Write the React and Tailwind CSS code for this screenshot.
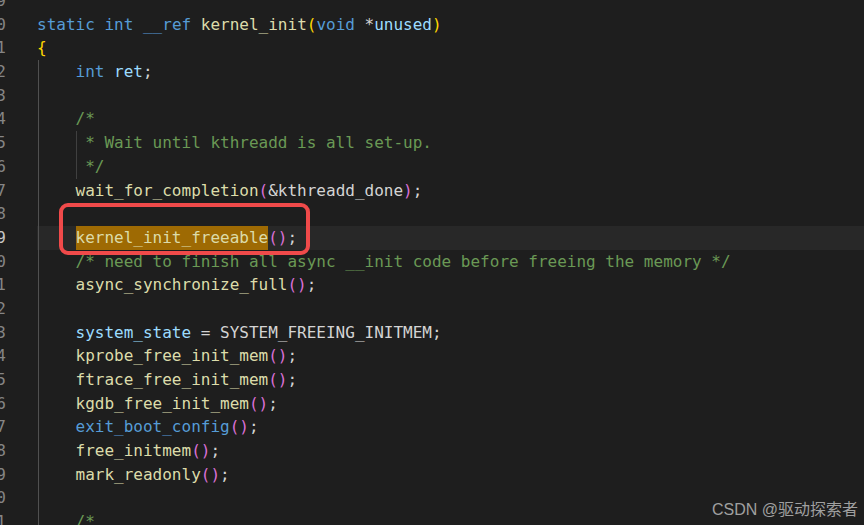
const C = {
  k: 'text-[#569cd6]',
  f: 'text-[#dcdcaa]',
  v: 'text-[#9cdcfe]',
  p: 'text-[#d4d4d4]',
  c: 'text-[#6a9955]',
  b1: 'text-[#ffd700]',
  b2: 'text-[#da70d6]',
};

// each line: [tokens, indent guides]
const lines = [
  [[], 0],
  [[['static', 'k'], [' ', 'p'], ['int', 'k'], [' ', 'p'], ['__ref', 'k'], [' ', 'p'], ['kernel_init', 'f'], ['(', 'b1'], ['void', 'k'], [' *', 'p'], ['unused', 'v'], [')', 'b1']], 0],
  [[['{', 'b1']], 0],
  [[['    ', 'p'], ['int', 'k'], [' ', 'p'], ['ret', 'v'], [';', 'p']], 1],
  [[], 1],
  [[['    /*', 'c']], 1],
  [[['     * Wait until kthreadd is all set-up.', 'c']], 2],
  [[['     */', 'c']], 2],
  [[['    ', 'p'], ['wait_for_completion', 'f'], ['(', 'b2'], ['&kthreadd_done', 'p'], [')', 'b2'], [';', 'p']], 1],
  [[], 1],
  [[['    ', 'p'], ['kernel_init_freeable', 'hl'], ['()', 'b2'], [';', 'p']], 1],
  [[['    /* need to finish all async __init code before freeing the memory */', 'c']], 1],
  [[['    ', 'p'], ['async_synchronize_full', 'f'], ['()', 'b2'], [';', 'p']], 1],
  [[], 1],
  [[['    ', 'p'], ['system_state', 'v'], [' = SYSTEM_FREEING_INITMEM;', 'p']], 1],
  [[['    ', 'p'], ['kprobe_free_init_mem', 'f'], ['()', 'b2'], [';', 'p']], 1],
  [[['    ', 'p'], ['ftrace_free_init_mem', 'f'], ['()', 'b2'], [';', 'p']], 1],
  [[['    ', 'p'], ['kgdb_free_init_mem', 'f'], ['()', 'b2'], [';', 'p']], 1],
  [[['    ', 'p'], ['exit_boot_config', 'k'], ['()', 'b2'], [';', 'p']], 1],
  [[['    ', 'p'], ['free_initmem', 'f'], ['()', 'b2'], [';', 'p']], 1],
  [[['    ', 'p'], ['mark_readonly', 'f'], ['()', 'b2'], [';', 'p']], 1],
  [[], 1],
  [[['    /*', 'c']], 1],
];

const ACTIVE = 10;

export default function App() {
  return (
    <div className="relative w-[864px] h-[525px] overflow-hidden bg-[#1e1e1e] font-['DejaVu_Sans_Mono',monospace] text-[16px]">
      <div className="-mt-[11px]">
        {lines.map(([tokens, guides], i) => (
          <div key={i} className="flex h-[23.7px] leading-[23.7px]">
            <div className="w-[37px] shrink-0">
              <div className={`flex w-[6px] justify-end whitespace-pre ${i === ACTIVE ? 'text-[#c6c6c6]' : 'text-[#858585]'}`}>
                {1419 + i}
              </div>
            </div>
            <div className={`relative flex-1 whitespace-pre ${i === ACTIVE ? 'bg-[#282828]' : ''}`}>
              {guides >= 1 && <div className="absolute left-[1px] top-0 h-full w-px bg-[#505050]" />}
              {guides >= 2 && <div className="absolute left-[39px] top-0 h-full w-px bg-[#404040]" />}
              {tokens.map(([t, c], j) =>
                c === 'hl' ? (
                  <span key={j} className="inline-block bg-[#9e6a03] text-[#dcdcaa]">{t}</span>
                ) : (
                  <span key={j} className={C[c]}>{t}</span>
                )
              )}
            </div>
          </div>
        ))}
      </div>

      <div className="absolute left-[59px] top-[203px] h-[52px] w-[251px] rounded-[9px] border-[4.5px] border-[#f04a4a]" />

      <div className="absolute right-[6px] top-[498px] font-['Liberation_Sans','Noto_Sans_CJK_SC',sans-serif] text-[16px] text-[#a0a0a0]">
        CSDN @驱动探索者
      </div>
    </div>
  );
}
